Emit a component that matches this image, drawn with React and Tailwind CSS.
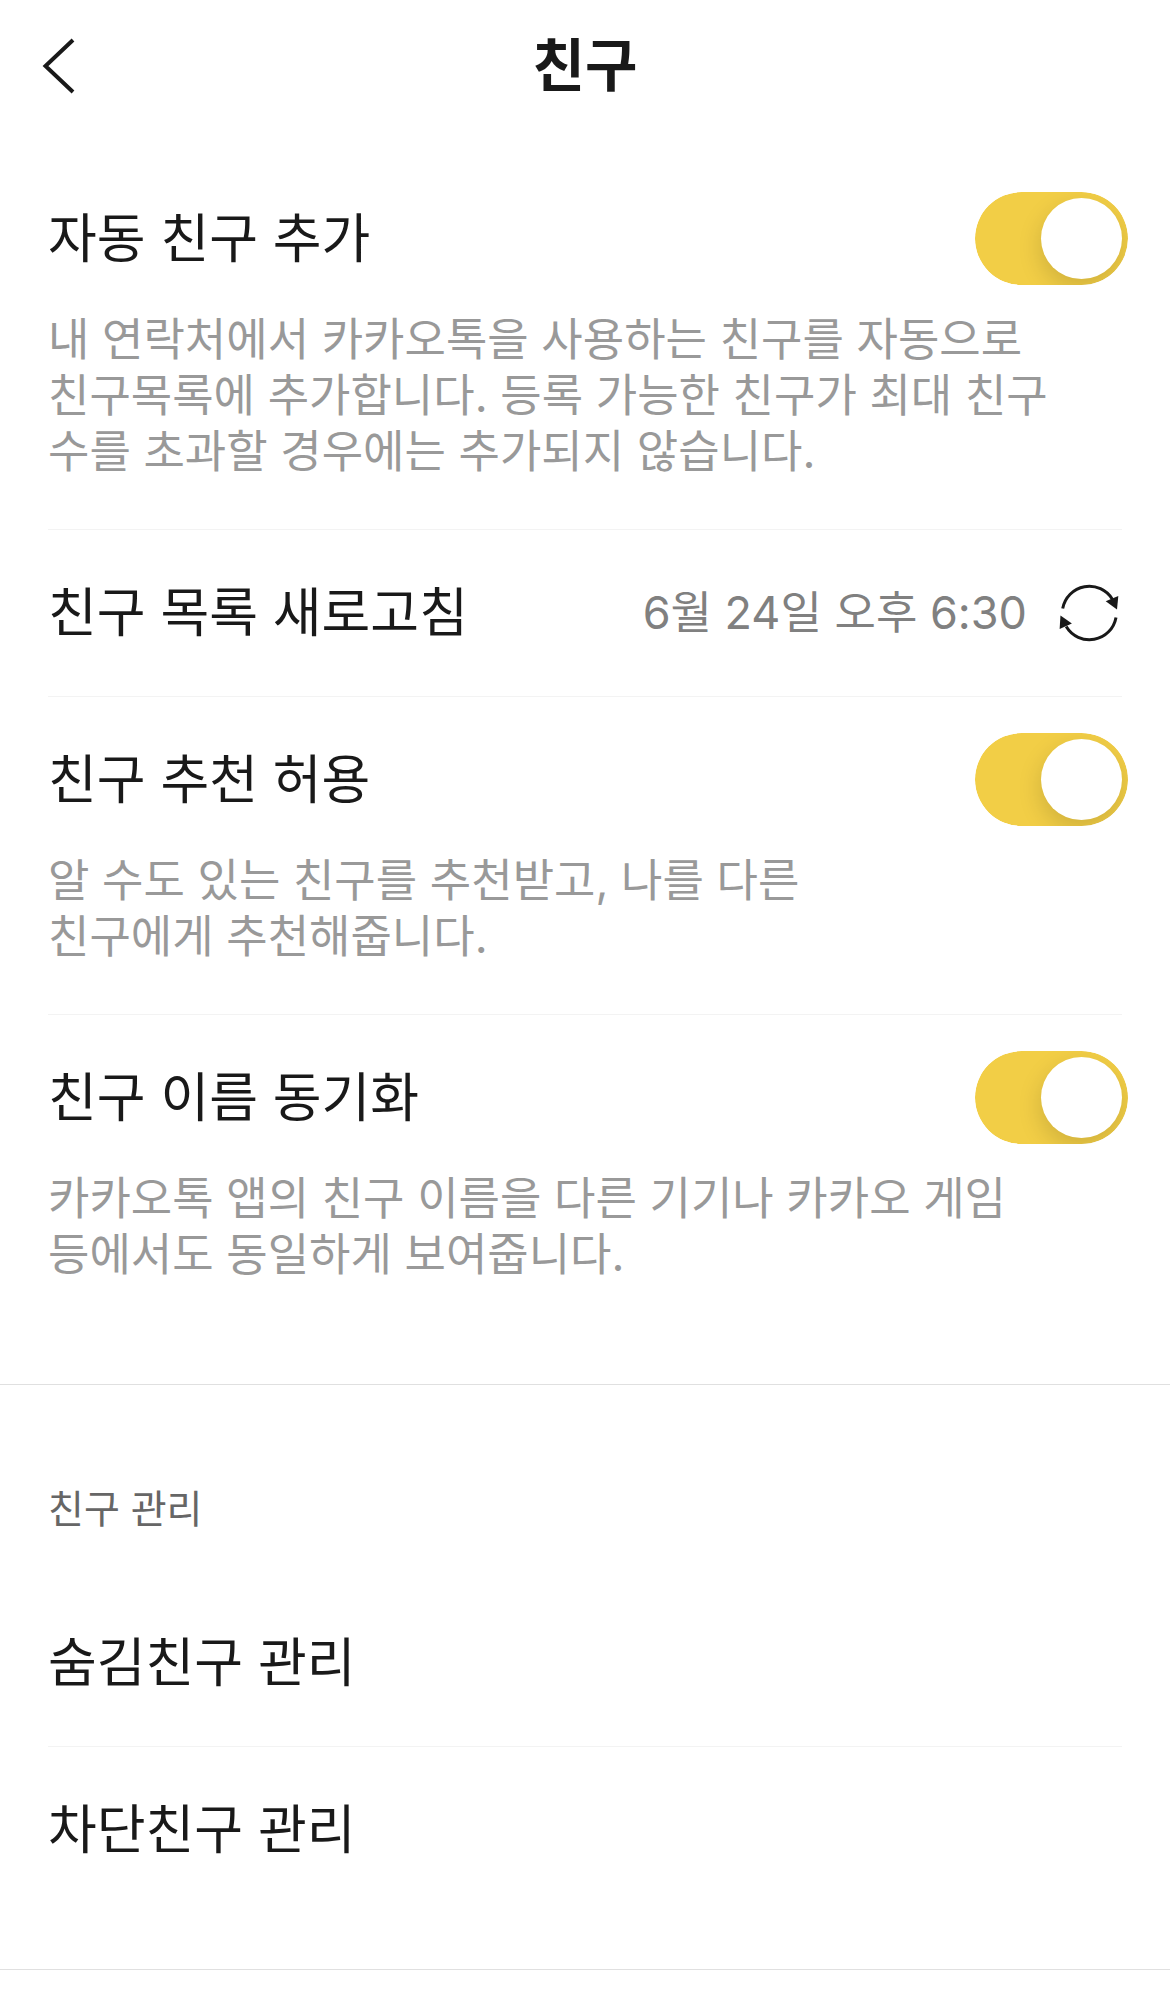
import React, { useState } from 'react';

const Toggle = ({ id, checked, onChange }) => (
  <span className="relative block h-[93px] w-[153px] shrink-0 overflow-hidden rounded-full">
    <input
      id={id}
      type="checkbox"
      role="switch"
      checked={checked}
      onChange={(e) => onChange(e.target.checked)}
      className="peer block h-full w-full cursor-pointer appearance-none rounded-full bg-gray-300 checked:bg-[#f2ce46]"
    />
    <span className="pointer-events-none absolute top-[6px] left-[6px] h-[81px] w-[81px] rounded-full bg-white shadow-[0_9px_24px_rgba(0,0,0,0.15)] peer-checked:left-[66px]" />
  </span>
);

const SettingSwitch = ({ id, title, description, checked, onChange }) => (
  <div>
    <div className="flex items-center justify-between pr-[42px]">
      <label htmlFor={id} className="text-[53px] leading-[64px]">
        {title}
      </label>
      <Toggle id={id} checked={checked} onChange={onChange} />
    </div>
    <p className="mt-[27px] mb-[49px] text-[45px] leading-[56px] whitespace-pre-line text-[#999999]">
      {description}
    </p>
  </div>
);

const Divider = () => <hr className="mr-12 border-[#f3f3f3]" />;

const RefreshIcon = () => (
  <svg viewBox="0 0 60 60" className="h-[60px] w-[60px]" fill="none" stroke="#191919" strokeWidth="3">
    <path d="M3.7 25.6A27 27 0 0 1 53.5 16.5" />
    <path d="M57 34.4A27 27 0 0 1 7.2 43.5" />
    <path d="M59.3 13L46.7 18.3L58 26.5Z" fill="#191919" stroke="none" />
    <path d="M1.5 32.5L12.9 40.4L0.6 46Z" fill="#191919" stroke="none" />
  </svg>
);

export default function App() {
  const [autoAdd, setAutoAdd] = useState(true);
  const [recommend, setRecommend] = useState(true);
  const [syncName, setSyncName] = useState(true);

  return (
    <div className="min-h-screen bg-white font-[Inter,'Noto_Sans_CJK_KR',sans-serif] text-[#191919]">
      <header className="grid h-[132px] grid-cols-3 items-center px-10">
        <button type="button" aria-label="뒤로" className="w-10">
          <svg viewBox="0 0 36 56" className="h-14 w-9" fill="none" stroke="#191919" strokeWidth="4">
            <path d="M33 2L5.5 28L33 54" />
          </svg>
        </button>
        <h1 className="text-center text-[57px] leading-[64px] font-bold">친구</h1>
      </header>

      <main>
        <section className="border-b border-[#e0e0e0] pt-[60px] pb-[52px] pl-12">
          <SettingSwitch
            id="auto-add"
            title="자동 친구 추가"
            description={
              '내 연락처에서 카카오톡을 사용하는 친구를 자동으로\n친구목록에 추가합니다. 등록 가능한 친구가 최대 친구\n수를 초과할 경우에는 추가되지 않습니다.'
            }
            checked={autoAdd}
            onChange={setAutoAdd}
          />
          <Divider />
          <div className="flex h-[166px] items-center justify-between pr-[51px]">
            <h2 className="text-[53px] leading-[64px]">친구 목록 새로고침</h2>
            <div className="flex items-center gap-8">
              <time className="text-[45px] leading-[64px] text-[#808080]">6월 24일 오후 6:30</time>
              <button type="button" aria-label="새로고침">
                <RefreshIcon />
              </button>
            </div>
          </div>
          <Divider />
          <div className="pt-9">
            <SettingSwitch
              id="recommend"
              title="친구 추천 허용"
              description={'알 수도 있는 친구를 추천받고, 나를 다른\n친구에게 추천해줍니다.'}
              checked={recommend}
              onChange={setRecommend}
            />
          </div>
          <Divider />
          <div className="pt-9">
            <SettingSwitch
              id="sync-name"
              title="친구 이름 동기화"
              description={
                '카카오톡 앱의 친구 이름을 다른 기기나 카카오 게임\n등에서도 동일하게 보여줍니다.'
              }
              checked={syncName}
              onChange={setSyncName}
            />
          </div>
        </section>

        <section className="border-b border-[#e0e0e0] pt-24 pb-14 pl-12">
          <h2 className="mb-[43px] text-[39px] leading-[56px] text-[#666666]">친구 관리</h2>
          <a href="#hidden" className="flex h-[166px] items-center text-[53px] leading-[64px]">
            숨김친구 관리
          </a>
          <Divider />
          <a href="#blocked" className="flex h-[166px] items-center text-[53px] leading-[64px]">
            차단친구 관리
          </a>
        </section>
      </main>
    </div>
  );
}
